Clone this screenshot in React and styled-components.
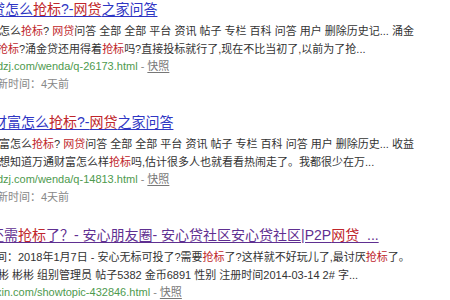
import React from "react";
import styled, { createGlobalStyle } from "styled-components";

const Global = createGlobalStyle`
  html, body { margin: 0; padding: 0; background: #fff; }
  body { width: 450px; height: 300px; overflow: hidden; }
`;

const Page = styled.div`
  width: 450px;
  height: 300px;
  overflow: hidden;
  background: #fff;
  font-family: "Liberation Sans", Arial, "Noto Sans CJK SC", sans-serif;
  color: #333;
  display: flex;
  flex-direction: column;
  gap: 20px;
`;

const Result = styled.div`
  display: flex;
  flex-direction: column;
`;

const Title = styled.a`
  display: block;
  font-size: 14px;
  line-height: 18px;
  height: 18px;
  white-space: nowrap;
  overflow: hidden;
  text-indent: ${(p) => p.$shift}px;
  color: ${(p) => (p.$visited ? "#5f2f91" : "#2f36c4")};
  text-decoration: underline;
  text-underline-offset: 2px;
  margin-bottom: 5px;
  cursor: pointer;
`;

const Em = styled.em`
  font-style: normal;
  color: #c0262b;
`;

const Line = styled.div`
  font-size: 11px;
  line-height: 17.5px;
  height: 17.5px;
  white-space: nowrap;
  overflow: hidden;
  text-indent: ${(p) => p.$shift}px;
  color: ${(p) => p.$tone || "#333"};
`;

const Url = styled.span`
  color: #4e9a4e;
`;

const Snap = styled.a`
  color: #777;
  text-decoration: underline;
  text-underline-offset: 2px;
`;

const Sep = styled.span`
  color: #888;
`;

function UrlLine({ url, shift }) {
  return (
    <Line $shift={shift}>
      <Url>{url}</Url>
      <Sep> - </Sep>
      <Snap>快照</Snap>
    </Line>
  );
}

export default function App() {
  return (
    <>
      <Global />
      <Page>
        <Result>
          <Title $shift={-9}>
            贷怎么<Em>抢标</Em>?-<Em>网贷</Em>之家问答
          </Title>
          <Line $shift={-12}>
            贷怎么<Em>抢标</Em>? <Em>网贷</Em>问答 全部 全部 平台 资讯 帖子 专栏 百科 问答 用户 删除历史记... 涌金
          </Line>
          <Line $shift={-3}>
            <Em>抢标</Em>?涌金贷还用得着<Em>抢标</Em>吗?直接投标就行了,现在不比当初了,以前为了抢...
          </Line>
          <UrlLine url="wdzj.com/wenda/q-26173.html" shift={-11} />
          <Line $shift={-14} $tone="#888">
            更新时间：4天前
          </Line>
        </Result>

        <Result>
          <Title $shift={-7}>
            财富怎么<Em>抢标</Em>?-<Em>网贷</Em>之家问答
          </Title>
          <Line $shift={-12}>
            财富怎么<Em>抢标</Em>? <Em>网贷</Em>问答 全部 全部 平台 资讯 帖子 专栏 百科 问答 用户 删除历史... 收益
          </Line>
          <Line $shift={-12}>
            我想知道万通财富怎么样<Em>抢标</Em>吗,估计很多人也就看看热闹走了。我都很少在万...
          </Line>
          <UrlLine url="wdzj.com/wenda/q-14813.html" shift={-11} />
          <Line $shift={-14} $tone="#888">
            更新时间：4天前
          </Line>
        </Result>

        <Result>
          <Title $shift={-10} $visited>
            还需<Em>抢标</Em>了？- 安心朋友圈- 安心贷社区安心贷社区|P2P<Em>网贷</Em>_...
          </Title>
          <Line $shift={-15}>
            时间：2018年1月7日 - 安心无标可投了?需要<Em>抢标</Em>了?这样就不好玩儿了,最讨厌<Em>抢标</Em>了。
          </Line>
          <Line $shift={-2}>
            彬 彬彬 组别管理员 帖子5382 金币6891 性别 注册时间2014-03-14 2# 字...
          </Line>
          <UrlLine url="xin.com/showtopic-432846.html" shift={-4} />
        </Result>
      </Page>
    </>
  );
}
